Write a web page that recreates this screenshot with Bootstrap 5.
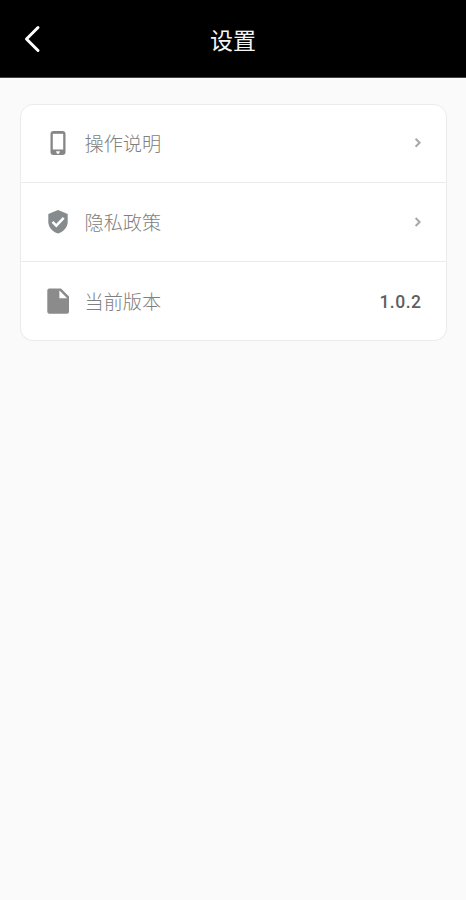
<!DOCTYPE html>
<html lang="zh-CN">
<head>
<meta charset="utf-8">
<meta name="viewport" content="width=device-width, initial-scale=1">
<title>设置</title>
<link href="https://cdn.jsdelivr.net/npm/bootstrap@5.3.0/dist/css/bootstrap.min.css" rel="stylesheet">
<style>
body { background: #fafafa; font-family: Roboto, "Noto Sans CJK SC", sans-serif; min-height: 100vh; }
.top-bar { height: 78px; background: #000; display: grid; grid-template-columns: 64px 1fr 64px; padding-top: 1px; border-bottom: 1px solid #444; }
.top-title { font-size: 23px; line-height: 34px; padding-top: 5px; font-weight: 400; color: #f4f4f4; }
.back-btn { line-height: 0; padding: 0 0 0 23.5px; }
.settings { margin: 26px 19px 0 20px; --bs-list-group-border-color: #ebebeb; --bs-list-group-border-radius: 13px; --bs-list-group-border-width: 1.5px; }
.settings .list-group-item { height: 79.2px; padding: 0 23px 0 25px; color: #808080; font-size: 19.2px; background: #fff; }
.settings .list-group-item:last-child { height: 79px; padding-right: 24.5px; }
.row-icon { width: 24px; height: 30px; flex: none; }
.row-label { margin-left: 14.5px; padding-top: 3px; line-height: 28px; font-weight: 300; }
.version { color: #606060; font-size: 17.5px; font-weight: 500; letter-spacing: .5px; padding-top: 2px; }
</style>
<script src="https://cdn.jsdelivr.net/npm/bootstrap@5.3.0/dist/js/bootstrap.bundle.min.js"></script>
</head>
<body>
<header class="top-bar align-items-center">
  <button class="btn border-0 back-btn text-start" type="button" aria-label="返回">
    <svg width="17" height="28" viewBox="0 0 17 28" fill="none" stroke="#fff" stroke-width="3" stroke-linecap="round" stroke-linejoin="round"><path d="M14 2.5 2.5 14 14 25.5"/></svg>
  </button>
  <h1 class="top-title text-center m-0">设置</h1>
</header>
<main>
  <div class="list-group settings">
    <a href="#" class="list-group-item d-flex align-items-center">
      <svg class="row-icon" viewBox="0 0 24 30"><rect x="4.5" y="2" width="15" height="24" rx="3" fill="#868686"/><path d="M6.8 4.8h10.4v15.7H6.8z" fill="#fff"/><path d="M10 22.2h4l-1 2.6h-2z" fill="#fff"/></svg>
      <span class="row-label">操作说明</span>
      <svg class="ms-auto" width="10" height="14" viewBox="0 0 10 14" fill="none" stroke="#a8a8a8" stroke-width="2"><path d="m2.6 1.8 4 4-4 4"/></svg>
    </a>
    <a href="#" class="list-group-item d-flex align-items-center">
      <svg class="row-icon" viewBox="0 0 24 30"><path d="M12 3 2.3 7v7.8c0 5.3 4.1 10.2 9.7 11.7 5.6-1.5 9.7-6.4 9.7-11.7V7z" fill="#868b8e"/><path d="m6.5 14.8 3.8 3.8 7.4-7.7" fill="none" stroke="#fff" stroke-width="2.5"/></svg>
      <span class="row-label">隐私政策</span>
      <svg class="ms-auto" width="10" height="14" viewBox="0 0 10 14" fill="none" stroke="#a8a8a8" stroke-width="2"><path d="m2.6 3 4 4-4 4"/></svg>
    </a>
    <div class="list-group-item d-flex align-items-center">
      <svg class="row-icon" viewBox="0 0 24 30"><path d="M3.3 2.5H15l8 8v15.2a2 2 0 0 1-2 2H3.3a2 2 0 0 1-2-2V4.5a2 2 0 0 1 2-2z" fill="#8b8b8b"/><path d="M13.4 4.5v7.7h7.8z" fill="#fff"/></svg>
      <span class="row-label">当前版本</span>
      <span class="version ms-auto">1.0.2</span>
    </div>
  </div>
</main>
</body>
</html>
